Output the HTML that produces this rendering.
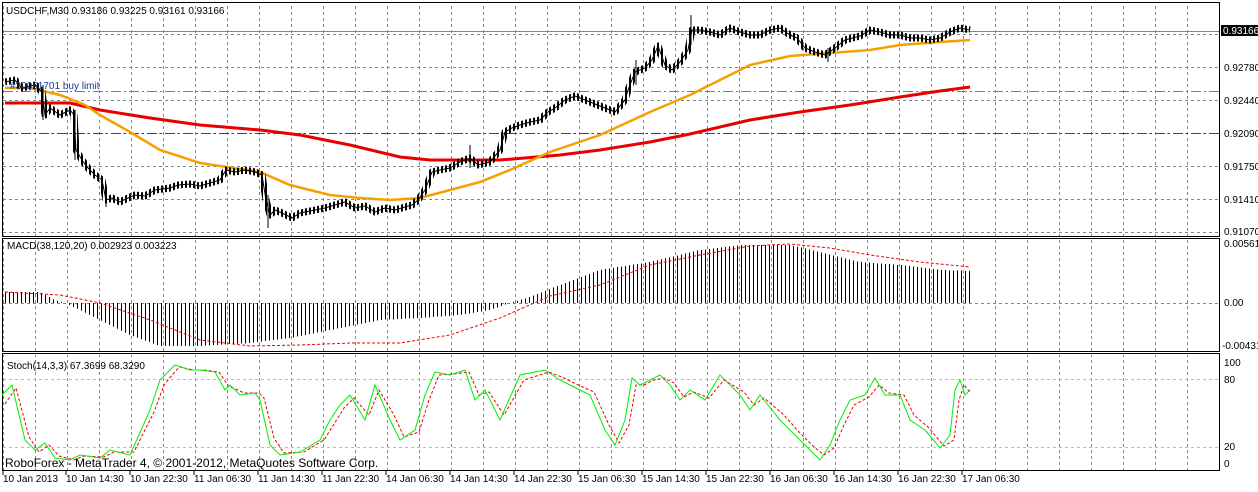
<!DOCTYPE html>
<html><head><meta charset="utf-8"><style>
html,body{margin:0;padding:0;background:#fff;}
body{width:1258px;height:487px;overflow:hidden;font-family:"Liberation Sans",sans-serif;}
svg text{font-family:"Liberation Sans",sans-serif;font-size:10px;fill:#000;}
</style></head><body>
<svg width="1258" height="487" viewBox="0 0 1258 487" xmlns="http://www.w3.org/2000/svg" shape-rendering="crispEdges">
<defs>
<pattern id="hist" x="5" y="0" width="4" height="487" patternUnits="userSpaceOnUse"><rect x="0" y="0" width="1" height="487" fill="#000"/></pattern>
<pattern id="cdl" x="5" y="0" width="4" height="487" patternUnits="userSpaceOnUse"><rect x="0" y="0" width="2" height="487" fill="#000"/></pattern>
<pattern id="vg" x="35" y="0" width="32" height="487" patternUnits="userSpaceOnUse"><line x1="0.5" y1="0" x2="0.5" y2="487" stroke="#77889a" stroke-dasharray="3,3"/></pattern>
</defs>
<rect width="1258" height="487" fill="#fff"/>
<rect x="3" y="3" width="1216" height="233" fill="url(#vg)"/>
<rect x="3" y="239" width="1216" height="112" fill="url(#vg)"/>
<rect x="3" y="355" width="1216" height="115" fill="url(#vg)"/>
<g stroke="#77889a" stroke-dasharray="3,3">
<line x1="3" y1="34.5" x2="1219" y2="34.5"/>
<line x1="3" y1="67.5" x2="1219" y2="67.5"/>
<line x1="3" y1="100.5" x2="1219" y2="100.5"/>
<line x1="3" y1="133.5" x2="1219" y2="133.5"/>
<line x1="3" y1="166.5" x2="1219" y2="166.5"/>
<line x1="3" y1="199.5" x2="1219" y2="199.5"/>
<line x1="3" y1="232.5" x2="1219" y2="232.5"/>
<line x1="3" y1="303.5" x2="1219" y2="303.5"/>
</g>
<g stroke="#bbb" stroke-dasharray="3,3">
<line x1="3" y1="379.5" x2="1219" y2="379.5"/>
<line x1="3" y1="447.5" x2="1219" y2="447.5"/>
</g>
<line x1="3" y1="31.5" x2="1219" y2="31.5" stroke="#77889a"/>
<line x1="3" y1="91.5" x2="1219" y2="91.5" stroke="#22bb22" stroke-dasharray="10,3,2,3"/>
<line x1="3" y1="133.5" x2="1219" y2="133.5" stroke="#e00" stroke-dasharray="10,3,2,3"/>
<g fill="none" stroke="#000">
<rect x="2.5" y="2.5" width="1217" height="234"/>
<rect x="2.5" y="238.5" width="1217" height="113"/>
<rect x="2.5" y="353.5" width="1217" height="117"/>
</g>
<polyline fill="none" stroke="#e80000" stroke-width="3" shape-rendering="auto" points="5,103 70,103 100,110 150,118 200,125 260,130 300,135 350,145 400,157 430,160 500,160 560,155 600,150 650,142 690,134 750,120 800,112 850,105 900,97 940,91 970,87"/>
<polyline fill="none" stroke="#f5a000" stroke-width="2.5" shape-rendering="auto" points="5,88 30,88 60,95 85,105 100,115 130,132 160,150 200,163 260,172 290,185 330,195 360,198 390,200 420,198 450,190 480,182 510,170 550,152 600,135 650,112 690,95 720,80 750,65 790,56 830,53 870,50 900,45 940,42 970,40"/>
<g fill="none" shape-rendering="auto">
<polyline stroke="url(#cdl)" stroke-width="7" stroke-linejoin="round" points="5,82 15,80 22,88 35,85 42,92 45,115 50,108 60,115 70,110 74,115 76,150 82,160 88,168 95,175 102,180 106,200 112,198 120,202 128,198 135,195 145,196 155,190 170,188 178,185 190,184 200,186 210,183 220,180 226,170 235,172 245,170 255,172 262,175 266,200 270,215 275,210 282,213 292,218 300,213 315,210 325,208 335,205 345,202 355,208 365,206 375,212 385,208 395,210 405,207 412,205 418,200 425,190 432,172 440,170 450,168 460,162 470,158 478,165 490,162 500,150 505,132 512,128 520,125 530,122 540,120 548,112 555,108 565,100 575,96 585,100 595,104 605,108 615,112 625,100 628,90 635,72 645,68 652,60 658,46 665,65 672,70 680,62 688,50 692,30 700,30 710,32 720,35 730,28 740,32 750,35 760,35 770,30 780,28 790,35 797,38 805,48 815,52 825,55 835,48 845,40 860,36 870,30 880,32 890,35 900,35 910,38 920,38 930,40 940,38 950,32 960,28 970,30"/>
<polyline stroke="#000" stroke-width="1" points="5,82 15,80 22,88 35,85 42,92 45,115 50,108 60,115 70,110 74,115 76,150 82,160 88,168 95,175 102,180 106,200 112,198 120,202 128,198 135,195 145,196 155,190 170,188 178,185 190,184 200,186 210,183 220,180 226,170 235,172 245,170 255,172 262,175 266,200 270,215 275,210 282,213 292,218 300,213 315,210 325,208 335,205 345,202 355,208 365,206 375,212 385,208 395,210 405,207 412,205 418,200 425,190 432,172 440,170 450,168 460,162 470,158 478,165 490,162 500,150 505,132 512,128 520,125 530,122 540,120 548,112 555,108 565,100 575,96 585,100 595,104 605,108 615,112 625,100 628,90 635,72 645,68 652,60 658,46 665,65 672,70 680,62 688,50 692,30 700,30 710,32 720,35 730,28 740,32 750,35 760,35 770,30 780,28 790,35 797,38 805,48 815,52 825,55 835,48 845,40 860,36 870,30 880,32 890,35 900,35 910,38 920,38 930,40 940,38 950,32 960,28 970,30"/>
</g>
<g stroke="#000" stroke-width="1">
<line x1="43" y1="85" x2="43" y2="120"/><line x1="75" y1="110" x2="75" y2="160"/><line x1="106" y1="185" x2="106" y2="207"/><line x1="268" y1="195" x2="268" y2="228"/><line x1="470" y1="145" x2="470" y2="168"/><line x1="636" y1="60" x2="636" y2="85"/><line x1="691" y1="15" x2="691" y2="45"/><line x1="828" y1="48" x2="828" y2="62"/>
</g>
<polygon fill="url(#hist)" points="5,292 40,292 55,300 65,303 80,310 100,320 130,335 160,346 200,346 250,343 290,338 330,330 380,320 420,318 460,315 490,310 510,303 530,297 560,285 600,270 650,262 700,250 740,245 790,245 820,252 860,262 900,265 940,270 972,271 972,303 5,303"/>
<polyline fill="none" stroke="#e00" stroke-dasharray="3,2" shape-rendering="auto" points="5,292 60,295 100,303 150,320 200,340 250,346 300,345 350,343 400,343 450,335 500,318 550,296 600,285 650,265 700,255 750,246 790,244 830,248 870,255 920,262 970,267"/>
<polyline fill="none" stroke="#e00" stroke-dasharray="3,2" shape-rendering="auto" points="5,404 16,388 29,437 39,452 49,445 59,456 74,460 84,456 104,457 114,452 134,452 154,412 164,385 179,367 194,370 204,370 219,372 229,387 234,388 244,393 259,393 264,398 274,438 284,453 304,452 324,440 334,424 344,408 354,398 369,415 379,390 394,415 404,437 419,432 429,400 439,375 454,374 469,372 479,395 489,392 504,415 524,380 549,372 564,378 574,383 594,392 609,425 619,443 629,425 636,385 644,385 654,380 664,378 674,383 684,397 694,392 709,398 724,380 744,392 754,405 764,398 784,415 799,432 814,447 824,455 834,448 844,425 854,405 869,397 879,385 889,393 904,395 914,415 929,428 944,446 954,440 959,400 964,385 970,392"/>
<polyline fill="none" stroke="#00ee00" stroke-width="1" shape-rendering="auto" points="2,395 12,385 25,440 35,450 45,443 55,458 70,460 80,455 100,458 110,450 130,455 150,410 160,380 175,365 190,370 200,370 215,372 225,390 230,385 240,395 255,393 260,400 270,445 280,455 300,452 320,440 330,420 340,405 350,395 365,420 375,385 390,420 400,440 415,430 425,395 435,372 450,375 465,370 475,400 485,390 500,420 520,375 545,370 560,380 570,385 590,395 605,430 615,445 625,420 632,378 640,385 650,380 660,375 670,385 680,400 690,390 705,400 720,375 740,395 750,410 760,395 780,420 795,435 810,450 820,460 830,445 840,420 850,400 865,395 875,378 885,395 900,395 910,420 925,430 940,448 950,435 955,390 960,380 965,395 970,390"/>
<text x="6" y="14">USDCHF,M30  0.93186 0.93225 0.93161 0.93166</text>
<text x="10" y="89" style="fill:#1a3a8a">#30061701 buy limit</text>
<text x="7" y="249">MACD(38,120,20) 0.002923 0.003223</text>
<text x="7" y="369">Stoch(14,3,3) 67.3699 68.3290</text>
<text x="5" y="467" style="font-size:12px">RoboForex - MetaTrader 4, © 2001-2012, MetaQuotes Software Corp.</text>
<rect x="1221" y="25" width="37" height="11" fill="#000"/>
<text x="1223" y="34" style="fill:#fff">0.93166</text>
<g>
<text x="1224" y="71">0.92780</text>
<text x="1224" y="104">0.92440</text>
<text x="1224" y="137">0.92090</text>
<text x="1224" y="170">0.91750</text>
<text x="1224" y="203">0.91410</text>
<text x="1224" y="235">0.91070</text>
<text x="1224" y="247">0.00561</text>
<text x="1224" y="306">0.00</text>
<text x="1222" y="349">-0.00431</text>
<text x="1224" y="366">100</text>
<text x="1224" y="383">80</text>
<text x="1224" y="450">20</text>
<text x="1224" y="467">0</text>
</g>
<g>
<text x="3" y="482">10 Jan 2013</text>
<text x="66" y="482">10 Jan 14:30</text>
<text x="130" y="482">10 Jan 22:30</text>
<text x="194" y="482">11 Jan 06:30</text>
<text x="258" y="482">11 Jan 14:30</text>
<text x="322" y="482">11 Jan 22:30</text>
<text x="386" y="482">14 Jan 06:30</text>
<text x="450" y="482">14 Jan 14:30</text>
<text x="514" y="482">14 Jan 22:30</text>
<text x="578" y="482">15 Jan 06:30</text>
<text x="642" y="482">15 Jan 14:30</text>
<text x="706" y="482">15 Jan 22:30</text>
<text x="770" y="482">16 Jan 06:30</text>
<text x="834" y="482">16 Jan 14:30</text>
<text x="898" y="482">16 Jan 22:30</text>
<text x="962" y="482">17 Jan 06:30</text>
</g>
<g stroke="#000"><line x1="3" y1="471" x2="3" y2="475"/><line x1="66" y1="471" x2="66" y2="475"/><line x1="130" y1="471" x2="130" y2="475"/><line x1="194" y1="471" x2="194" y2="475"/><line x1="258" y1="471" x2="258" y2="475"/><line x1="322" y1="471" x2="322" y2="475"/><line x1="386" y1="471" x2="386" y2="475"/><line x1="450" y1="471" x2="450" y2="475"/><line x1="514" y1="471" x2="514" y2="475"/><line x1="578" y1="471" x2="578" y2="475"/><line x1="642" y1="471" x2="642" y2="475"/><line x1="706" y1="471" x2="706" y2="475"/><line x1="770" y1="471" x2="770" y2="475"/><line x1="834" y1="471" x2="834" y2="475"/><line x1="898" y1="471" x2="898" y2="475"/><line x1="962" y1="471" x2="962" y2="475"/></g>
</svg>
</body></html>
